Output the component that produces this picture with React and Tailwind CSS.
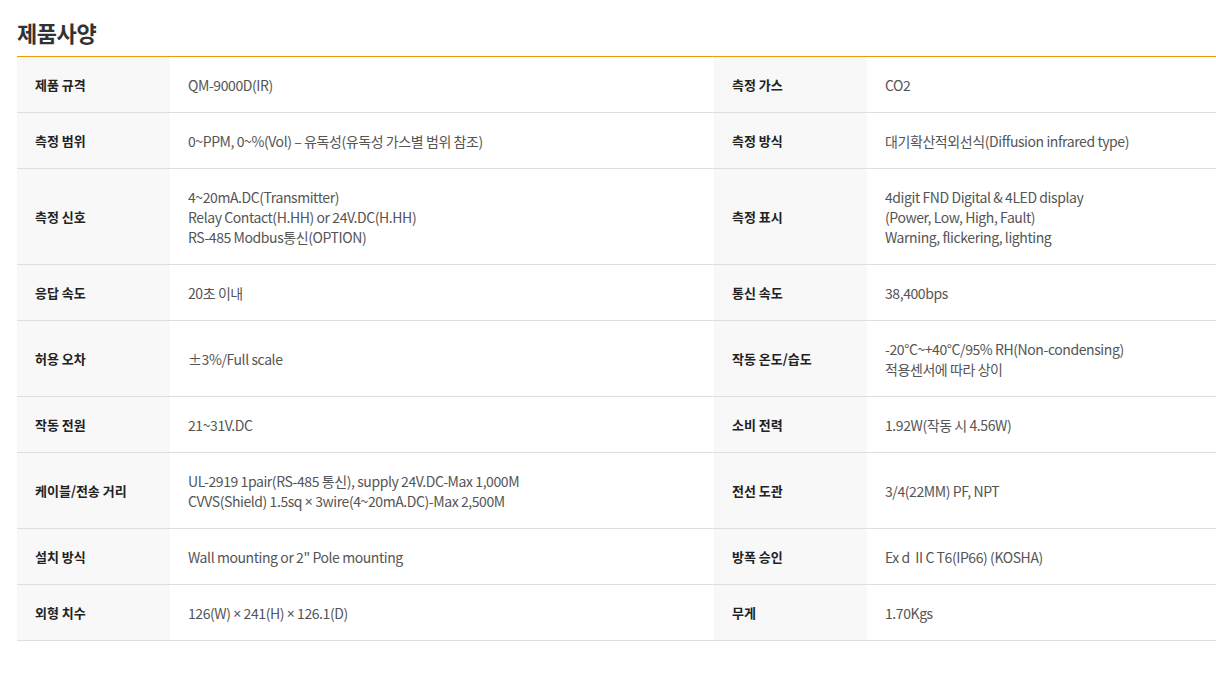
import React from 'react';

const X = () => <span className="font-['Noto_Sans',sans-serif] leading-none">×</span>;

const rows = [
  ['제품 규격', ['QM-9000D(IR)'], '측정 가스', ['CO2']],
  ['측정 범위', ['0~PPM, 0~%(Vol) – 유독성(유독성 가스별 범위 참조)'], '측정 방식', ['대기확산적외선식(Diffusion infrared type)']],
  [
    '측정 신호',
    ['4~20mA.DC(Transmitter)', 'Relay Contact(H.HH) or 24V.DC(H.HH)', 'RS-485 Modbus통신(OPTION)'],
    '측정 표시',
    ['4digit FND Digital & 4LED display', '(Power, Low, High, Fault)', 'Warning, flickering, lighting'],
  ],
  ['응답 속도', ['20초 이내'], '통신 속도', ['38,400bps']],
  ['허용 오차', ['±3%/Full scale'], '작동 온도/습도', ['-20°C~+40°C/95% RH(Non-condensing)', '적용센서에 따라 상이']],
  ['작동 전원', ['21~31V.DC'], '소비 전력', ['1.92W(작동 시 4.56W)']],
  [
    '케이블/전송 거리',
    ['UL-2919 1pair(RS-485 통신), supply 24V.DC-Max 1,000M', <>CVVS(Shield) 1.5sq <X /> 3wire(4~20mA.DC)-Max 2,500M</>],
    '전선 도관',
    ['3/4(22MM) PF, NPT'],
  ],
  ['설치 방식', ['Wall mounting or 2" Pole mounting'], '방폭 승인', ['Ex d  II C T6(IP66) (KOSHA)']],
  ['외형 치수', [<>126(W) <X /> 241(H) <X /> 126.1(D)</>], '무게', ['1.70Kgs']],
];

const Label = ({ children }) => (
  <div className="w-[153px] shrink-0 bg-[#f8f8f8] px-[18px] flex items-center text-[13px] font-bold text-[#222]">
    {children}
  </div>
);

const Value = ({ lines, className }) => (
  <div className={`py-[17.5px] px-[18px] flex flex-col justify-center text-[14px] leading-[20px] text-[#555] tracking-[-0.03em] ${className}`}>
    {lines.map((l, i) => (
      <div key={i} className="whitespace-pre h-[20px]">{l}</div>
    ))}
  </div>
);

export default function App() {
  return (
    <div className="bg-white min-h-screen pl-[17px] pt-[17px] font-['Noto_Sans_CJK_KR','Noto_Sans',sans-serif]">
      <h2 className="text-[22px] font-bold text-[#333] leading-[30px] tracking-[-0.02em]">제품사양</h2>
      <div className="mt-[9px] border-t border-[#f39800]">
        {rows.map((r, i) => (
          <div key={i} className="flex border-b border-[#dedede]">
            <Label>{r[0]}</Label>
            <Value lines={r[1]} className="w-[544px] shrink-0" />
            <Label>{r[2]}</Label>
            <Value lines={r[3]} className="flex-1" />
          </div>
        ))}
      </div>
    </div>
  );
}
